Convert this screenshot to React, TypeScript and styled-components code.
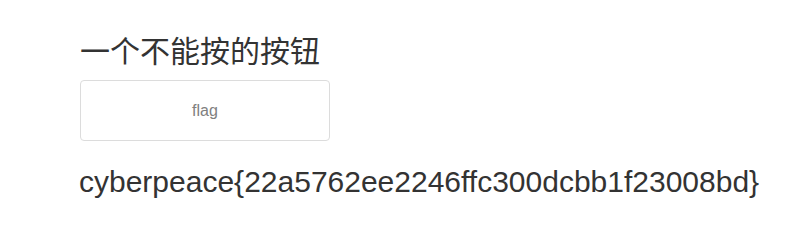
import styled, {createGlobalStyle} from 'styled-components';

const GlobalStyle = createGlobalStyle`
	html,
	body {
		margin: 0;
		padding: 0;
		background: #fff;
	}

	body {
		font-family: 'Liberation Sans', Arial, 'Noto Sans CJK SC', sans-serif;
		color: #333;
	}
`;

function App() {
	return (
		<>
			<GlobalStyle />
			<Page>
				<Title>一个不能按的按钮</Title>
				<FlagButton type="button" disabled>
					flag
				</FlagButton>
				<Result>cyberpeace{'{'}22a5762ee2246ffc300dcbb1f23008bd{'}'}</Result>
			</Page>
		</>
	);
}

export default App;

const Page = styled.main`
	display: flex;
	flex-direction: column;
	align-items: flex-start;
	padding: 33px 0 0 80px;
`;

const Title = styled.h3`
	margin: 0 0 14px;
	font-family: 'Noto Sans CJK SC', 'Liberation Sans', sans-serif;
	font-size: 30px;
	font-weight: 400;
	line-height: 33px;
	color: #333;
`;

const FlagButton = styled.button`
	width: 250px;
	height: 61px;
	padding: 0;
	background: #fff;
	border: 1px solid #dcdcdc;
	border-radius: 4px;
	font-family: 'Liberation Sans', Arial, sans-serif;
	font-size: 16px;
	color: #808080;
	cursor: not-allowed;
`;

const Result = styled.p`
	margin: 24px 0 0 -1px;
	font-size: 30px;
	line-height: 33px;
	color: #333;
`;
